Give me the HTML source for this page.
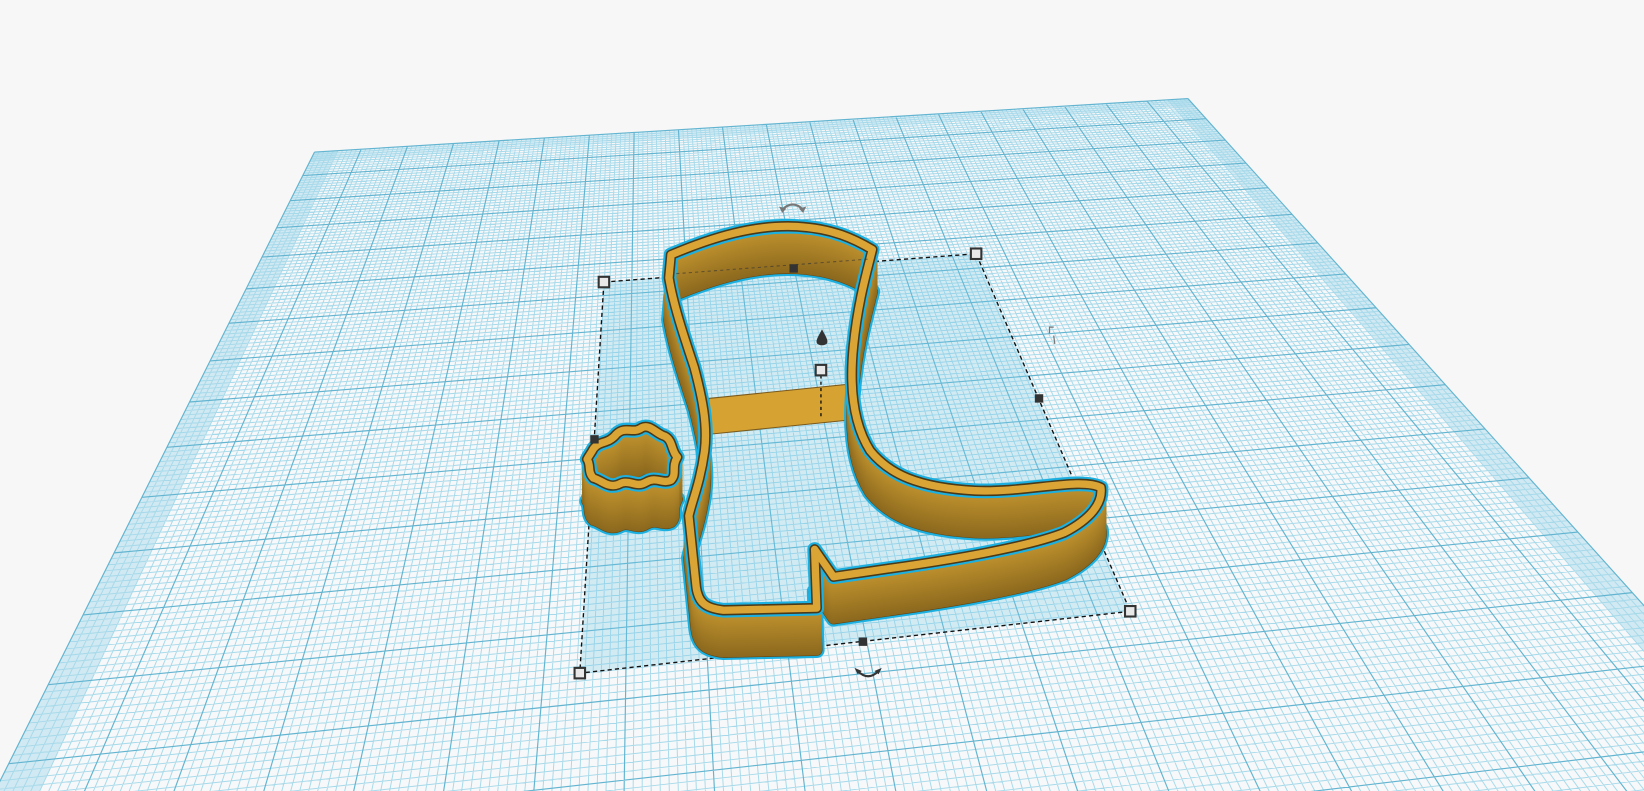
<!DOCTYPE html>
<html><head><meta charset="utf-8"><style>
html,body{margin:0;padding:0;background:#f7f7f7;width:1644px;height:791px;overflow:hidden}
svg{display:block;position:absolute;left:0;top:0}
</style></head><body>
<svg id="s" width="1644" height="791" viewBox="0 0 1568 754.4" preserveAspectRatio="none" xmlns="http://www.w3.org/2000/svg">
<rect width="1568" height="755" fill="#f7f7f7"/>
<g id="grid"></g>
<g id="sel">
<polygon points="576,269 931,242 1078,583 553,642" fill="rgba(120,200,230,0.28)" stroke="#111" stroke-width="1.3" stroke-dasharray="4,3"/>
</g>
<defs>
<path id="rim" fill="none" stroke-linejoin="round" d="M640,243 C680,226 720,214 760,216 C795,218 815,228 832,238 C826,262 818,290 814,330 C810,370 814,405 830,430 C848,452 875,465 930,468 C980,470 1030,455 1050,465 C1052,480 1040,495 1015,508 C980,522 900,535 850,542 L795,550 L777,524 L779,580 L690,582 C672,580 666,574 664,560 L657,492 C660,478 668,460 672,430 C675,405 670,380 662,350 C652,320 642,290 638,265 Z"/>
<path id="spur" fill="none" stroke-linejoin="round" d="M566,428 C572,420 580,424 588,414 C596,406 604,414 612,408 C620,404 626,414 634,416 C642,420 640,430 646,436 C640,446 646,452 640,458 C632,462 626,454 616,460 C606,466 600,456 590,462 C580,466 574,458 566,456 C560,450 564,444 560,438 C562,434 564,432 566,428 Z"/>
</defs>
<g id="boot"></g>
<g id="ui">
<line x1="783" y1="358" x2="783" y2="400" stroke="#111" stroke-width="1.3" stroke-dasharray="3,3"/>
<line x1="645" y1="261" x2="830" y2="247" stroke="#333" stroke-width="1" stroke-dasharray="3,3" opacity="0.6"/>
<path d="M784,314 C781,320 778,324 779,327 C780,330 788,330 789,327 C790,324 787,320 784,314 Z" fill="#333"/>
<rect x="571" y="264" width="10" height="10" fill="#e8e8e8" stroke="#333" stroke-width="2"/>
<rect x="926" y="237" width="10" height="10" fill="#e8e8e8" stroke="#333" stroke-width="2"/>
<rect x="1073" y="578" width="10" height="10" fill="#e8e8e8" stroke="#333" stroke-width="2"/>
<rect x="548" y="637" width="10" height="10" fill="#e8e8e8" stroke="#333" stroke-width="2"/>
<rect x="778" y="348" width="10" height="10" fill="#e8e8e8" stroke="#333" stroke-width="2"/>
<rect x="753" y="252" width="8" height="8" fill="#333"/>
<rect x="987" y="376" width="8" height="8" fill="#333"/>
<rect x="819" y="608" width="8" height="8" fill="#333"/>
<rect x="563" y="415" width="8" height="8" fill="#333"/>
<path d="M746,200 Q756,190 766,200" fill="none" stroke="#777" stroke-width="2"/>
<path d="M743,197 l3,6 l4,-4 z M769,197 l-3,6 l-4,-4 z" fill="#777"/>
<path d="M818,640 Q828,650 838,640" fill="none" stroke="#333" stroke-width="2"/>
<path d="M815,637 l3,6 l4,-3 z M841,637 l-3,6 l-4,-3 z" fill="#333"/>
<path d="M1001,318 l0,-6 l4,0 M1005,320 l1,8" fill="none" stroke="#777" stroke-width="1.2"/>
</g>
</svg>
<script>
(function(){
var NS="http://www.w3.org/2000/svg";
var a=0.00357,b=0.0344;
function P(u,n){var d=a*u-b*n+1;return [(a*12800*u-b*614*n+300)/d,(-620*a*u+483*b*n+145)/d];}
var g=document.getElementById('grid');
function poly(pts,fill){var p=document.createElementNS(NS,'polygon');p.setAttribute('points',pts.map(function(q){return q[0].toFixed(1)+','+q[1].toFixed(1)}).join(' '));p.setAttribute('fill',fill);g.appendChild(p);}
var N=17;
poly([P(0,0),P(20,0),P(20,N),P(0,N)],'#f6f8f9');
poly([P(0,0),P(0.5,0),P(0.5,N),P(0,N)],'rgba(110,195,225,0.28)');
poly([P(19.5,0),P(20,0),P(20,N),P(19.5,N)],'rgba(110,195,225,0.28)');
poly([P(0,0),P(20,0),P(20,0.4),P(0,0.4)],'rgba(110,195,225,0.2)');
var minor='',major='';
function seg(p,q){return 'M'+p[0].toFixed(1)+','+p[1].toFixed(1)+'L'+q[0].toFixed(1)+','+q[1].toFixed(1);}
for(var i=0;i<=200;i++){var s=seg(P(i/10,0),P(i/10,N));if(i%10==0)major+=s;else minor+=s;}
for(var j=0;j<=N*10;j++){var s2=seg(P(0,j/10),P(20,j/10));if(j%10==0)major+=s2;else minor+=s2;}
function path(d,c,w){var p=document.createElementNS(NS,'path');p.setAttribute('d',d);p.setAttribute('stroke',c);p.setAttribute('stroke-width',w);p.setAttribute('fill','none');g.appendChild(p);}
path(minor,'#a6d9ea',0.9);
path(major,'#62b4d0',1.1);
var bt=document.getElementById('boot');
function use(id,dy,c,w){var u=document.createElementNS(NS,'use');u.setAttribute('href','#'+id);u.setAttribute('transform','translate(0,'+dy+')');u.setAttribute('stroke',c);u.setAttribute('stroke-width',w);bt.appendChild(u);}
var H=40;
var bar=document.createElementNS(NS,'polygon');bar.setAttribute('points','676,380 814,366 816,400 678,414');bar.setAttribute('fill','#d6a232');bar.setAttribute('stroke','#7a5a1c');bar.setAttribute('stroke-width','1');bt.appendChild(bar);
['spur','rim'].forEach(function(id){
use(id,H,'#1cb0e0',15);
use(id,H,'#5a4418',11);
for(var k=H;k>=2;k-=2){var t=k/H;var r=Math.round(190-50*t),gg=Math.round(145-40*t),bb=Math.round(45-15*t);use(id,k,'rgb('+r+','+gg+','+bb+')',10);}
use(id,0,'#1cb0e0',14);
use(id,0,'#4a3a1a',10);
use(id,0,'#dba536',7);
});
})();
</script>
</body></html>
